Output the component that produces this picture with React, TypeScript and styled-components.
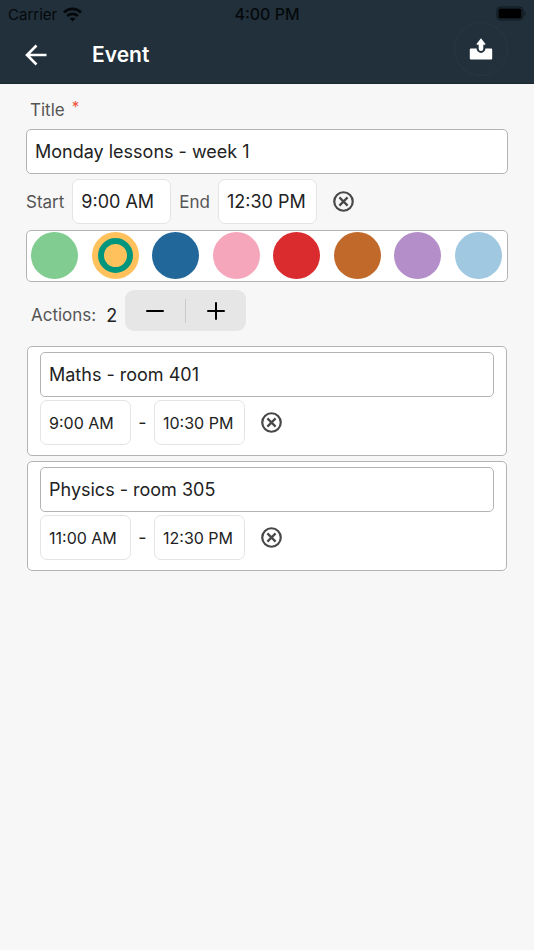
import React, { useState } from "react";
import styled, { createGlobalStyle } from "styled-components";

const GlobalStyle = createGlobalStyle`
  *, *::before, *::after { box-sizing: border-box; }
  body {
    margin: 0;
    background: #f7f7f7;
    color: #222;
    font-family: Inter, "Liberation Sans", sans-serif;
  }
  button, input { font-family: inherit; color: inherit; margin: 0; }
  button { border: 0; padding: 0; background: none; cursor: pointer; }
`;

const Header = styled.header`
  background: #21303a;
  border-bottom: 1px solid #1b2932;
`;

const StatusBar = styled.div`
  display: grid;
  grid-template-columns: 1fr auto 1fr;
  align-items: center;
  height: 28px;
  padding: 0 8px;
  color: #05090c;
  font-size: 15px;
`;

const Carrier = styled.span`
  display: flex;
  align-items: center;
  gap: 6px;
`;

const Clock = styled.span`
  font-size: 16px;
  font-weight: 500;
`;

const Battery = styled.svg`
  justify-self: end;
  margin-bottom: 2px;
`;

const NavBar = styled.div`
  display: flex;
  align-items: center;
  height: 55px;
  padding: 0 26px 2px 24px;
  color: #fff;
`;

const BackButton = styled.button`
  display: flex;
  width: 24px;
  height: 24px;
  color: #fff;
`;

const Heading = styled.h1`
  flex: 1;
  margin: 0 0 0 44px;
  font-size: 21px;
  line-height: 28px;
  font-weight: 600;
`;

const ShareButton = styled.button`
  display: flex;
  align-items: center;
  justify-content: center;
  width: 54px;
  height: 54px;
  margin-bottom: 12px;
  border: 1px solid #263943;
  border-radius: 50%;
  color: #fff;
`;

const Form = styled.form`
  padding: 13px 26px;
`;

const Label = styled.label`
  color: #555;
  font-size: 17px;
  line-height: 26px;
`;

const TitleLabel = styled(Label)`
  display: flex;
  gap: 7px;
  padding-left: 4px;
  margin-bottom: 6px;
`;

const Required = styled.span`
  color: #f0503a;
  font-size: 15px;
  line-height: 20px;
`;

const TextField = styled.input`
  display: block;
  width: 100%;
  height: 45px;
  padding: 0 8px;
  border: 1px solid #b4b4b4;
  border-radius: 5px;
  outline-color: #00967d;
  background: #fff;
  font-size: 18px;
`;

const TimeField = styled.input<{ $compact?: boolean }>`
  width: ${(p) => (p.$compact ? 91 : 99)}px;
  height: 45px;
  padding: 0 0 0 8px;
  border: 1px solid #e4e4e4;
  border-radius: 7px;
  outline-color: #00967d;
  background: #fff;
  font-size: ${(p) => (p.$compact ? 16 : 18)}px;
`;

const TimeRow = styled.div`
  display: flex;
  align-items: center;
  gap: 8px;
  margin: 5px 0 6px;
`;

const ClearButton = styled.button`
  display: flex;
  margin-left: 8px;
  color: #484848;
`;

const Palette = styled.fieldset`
  display: flex;
  justify-content: space-between;
  margin: 0;
  padding: 1px 5px 2px 4px;
  border: 1px solid #b4b4b4;
  border-radius: 5px;
  background: #fff;
`;

const Swatch = styled.input<{ $color: string }>`
  appearance: none;
  display: grid;
  place-items: center;
  width: 47px;
  height: 47px;
  border-radius: 50%;
  background: ${(p) => p.$color};
  cursor: pointer;
  &:checked::before {
    content: "";
    width: 35px;
    height: 35px;
    border: 6px solid #00967d;
    border-radius: 50%;
  }
`;

const ActionsRow = styled.div`
  display: flex;
  align-items: flex-end;
  margin: 8px 0 15px;
  padding-left: 5px;
`;

const Count = styled.output`
  margin: 0 8px 0 10px;
  font-size: 18px;
  line-height: 31px;
`;

const ActionsLabel = styled(Label)`
  line-height: 31px;
`;

const Stepper = styled.div`
  display: flex;
  align-items: center;
  width: 121px;
  height: 41px;
  border-radius: 9px;
  background: #e6e6e6;
`;

const StepButton = styled.button`
  display: flex;
  flex: 1;
  align-items: center;
  justify-content: center;
  height: 100%;
  color: #000;
`;

const Divider = styled.span`
  width: 1px;
  height: 24px;
  background: #cacaca;
`;

const Cards = styled.ul`
  display: grid;
  gap: 5px;
  margin: 0 1px;
  padding: 0;
  list-style: none;
`;

const Card = styled.li`
  padding: 5px 12px 10px;
  border: 1px solid #b4b4b4;
  border-radius: 5px;
  background: #fff;
`;

const CardTimes = styled.div`
  display: flex;
  align-items: center;
  margin-top: 3px;
`;

const Dash = styled.span`
  width: 23px;
  text-align: center;
  font-size: 18px;
`;

const CardClear = styled(ClearButton)`
  margin-left: 16px;
`;

const WifiIcon = () => (
  <svg width="19" height="15" viewBox="0 0 19 15" fill="none" stroke="currentColor" aria-hidden="true">
    <path d="M1 5.4C5.8.8 13.2.8 18 5.4" strokeWidth="2.8" />
    <path d="M4.2 9C7.2 6.2 11.8 6.2 14.8 9" strokeWidth="2.6" />
    <path d="M9.5 14.6 6.5 11.6C8.1 10.1 10.9 10.1 12.5 11.6Z" fill="currentColor" stroke="none" />
  </svg>
);

const BatteryIcon = () => (
  <Battery width="30" height="15" viewBox="0 0 30 15" aria-label="Battery full" role="img">
    <rect x="1" y="1" width="26" height="13" rx="4" fill="none" stroke="#10191f" strokeWidth="1.2" />
    <rect x="2.5" y="2.5" width="23" height="10" rx="2" fill="#000" />
    <path d="M28.3 5.2c1.700.6 1.700 4 0 4.600z" fill="#10191f" />
  </Battery>
);

const BackIcon = () => (
  <svg width="24" height="24" viewBox="0 0 24 24" fill="none" stroke="currentColor" strokeWidth="2.6" aria-hidden="true">
    <path d="M22.500 12H3.500M12.500 2.500 3 12l9.500 9.500" />
  </svg>
);

const ShareIcon = () => (
  <svg width="24" height="22" viewBox="0 0 24 22" fill="currentColor" aria-hidden="true">
    <path d="M1.800 10.500H7.600a4.400 4.400 0 0 0 8.800 0h5.800a1 1 0 0 1 1 1v9a1 1 0 0 1-1 1H1.800a1 1 0 0 1-1-1v-9a1 1 0 0 1 1-1Z" />
    <path d="M12 .3 16.300 5.800a.6.6 0 0 1-.5.900H14.300v4a2.300 2.300 0 0 1-4.600 0v-4H8.200a.6.6 0 0 1-.5-.9Z" />
  </svg>
);

const ClearIcon = () => (
  <svg width="21" height="21" viewBox="0 0 22 22" fill="none" stroke="currentColor" strokeWidth="2.300" aria-hidden="true">
    <circle cx="11" cy="11" r="9.700" />
    <path d="m6.700 6.700 8.600 8.600m0-8.600-8.600 8.600" />
  </svg>
);

const StepIcon = ({ plus }: { plus?: boolean }) => (
  <svg width="20" height="20" viewBox="0 0 20 20" stroke="currentColor" strokeWidth="2" strokeLinecap="round" aria-hidden="true">
    <path d={plus ? "M2 10h16M10 2v16" : "M2 10h16"} />
  </svg>
);

const colors = [
  { name: "Green", value: "#80cc91" },
  { name: "Yellow", value: "#ffc15c" },
  { name: "Blue", value: "#226799" },
  { name: "Pink", value: "#f6a6ba" },
  { name: "Red", value: "#da2c2e" },
  { name: "Brown", value: "#c1692b" },
  { name: "Purple", value: "#b48ec9" },
  { name: "Light blue", value: "#a0c8e0" },
];

type Action = { title: string; start: string; end: string };

const initialActions: Action[] = [
  { title: "Maths - room 401", start: "9:00 AM", end: "10:30 PM" },
  { title: "Physics - room 305", start: "11:00 AM", end: "12:30 PM" },
];

export default function App() {
  const [title, setTitle] = useState("Monday lessons - week 1");
  const [start, setStart] = useState("9:00 AM");
  const [end, setEnd] = useState("12:30 PM");
  const [color, setColor] = useState("Yellow");
  const [actions, setActions] = useState(initialActions);

  const update = (index: number, change: Partial<Action>) =>
    setActions((list) => list.map((a, i) => (i === index ? { ...a, ...change } : a)));

  return (
    <>
      <GlobalStyle />
      <Header>
        <StatusBar>
          <Carrier>Carrier <WifiIcon /></Carrier>
          <Clock>4:00 PM</Clock>
          <BatteryIcon />
        </StatusBar>
        <NavBar>
          <BackButton type="button" aria-label="Back"><BackIcon /></BackButton>
          <Heading>Event</Heading>
          <ShareButton type="button" aria-label="Share"><ShareIcon /></ShareButton>
        </NavBar>
      </Header>
      <Form onSubmit={(e) => e.preventDefault()}>
        <TitleLabel htmlFor="title">Title <Required>*</Required></TitleLabel>
        <TextField id="title" required value={title} onChange={(e) => setTitle(e.target.value)} />
        <TimeRow>
          <Label htmlFor="start">Start</Label>
          <TimeField id="start" value={start} onChange={(e) => setStart(e.target.value)} />
          <Label htmlFor="end">End</Label>
          <TimeField id="end" value={end} onChange={(e) => setEnd(e.target.value)} />
          <ClearButton type="button" aria-label="Clear times" onClick={() => { setStart(""); setEnd(""); }}>
            <ClearIcon />
          </ClearButton>
        </TimeRow>
        <Palette aria-label="Color">
          {colors.map((c) => (
            <Swatch
              key={c.name}
              type="radio"
              name="color"
              aria-label={c.name}
              $color={c.value}
              checked={color === c.name}
              onChange={() => setColor(c.name)}
            />
          ))}
        </Palette>
        <ActionsRow>
          <ActionsLabel htmlFor="count">Actions:</ActionsLabel>
          <Count id="count">{actions.length}</Count>
          <Stepper>
            <StepButton type="button" aria-label="Remove action" onClick={() => setActions((l) => l.slice(0, -1))}>
              <StepIcon />
            </StepButton>
            <Divider />
            <StepButton
              type="button"
              aria-label="Add action"
              onClick={() => setActions((l) => [...l, { title: "", start: "", end: "" }])}
            >
              <StepIcon plus />
            </StepButton>
          </Stepper>
        </ActionsRow>
        <Cards>
          {actions.map((a, i) => (
            <Card key={i}>
              <TextField aria-label="Action title" value={a.title} onChange={(e) => update(i, { title: e.target.value })} />
              <CardTimes>
                <TimeField $compact aria-label="Action start" value={a.start} onChange={(e) => update(i, { start: e.target.value })} />
                <Dash>-</Dash>
                <TimeField $compact aria-label="Action end" value={a.end} onChange={(e) => update(i, { end: e.target.value })} />
                <CardClear type="button" aria-label="Clear action times" onClick={() => update(i, { start: "", end: "" })}>
                  <ClearIcon />
                </CardClear>
              </CardTimes>
            </Card>
          ))}
        </Cards>
      </Form>
    </>
  );
}
